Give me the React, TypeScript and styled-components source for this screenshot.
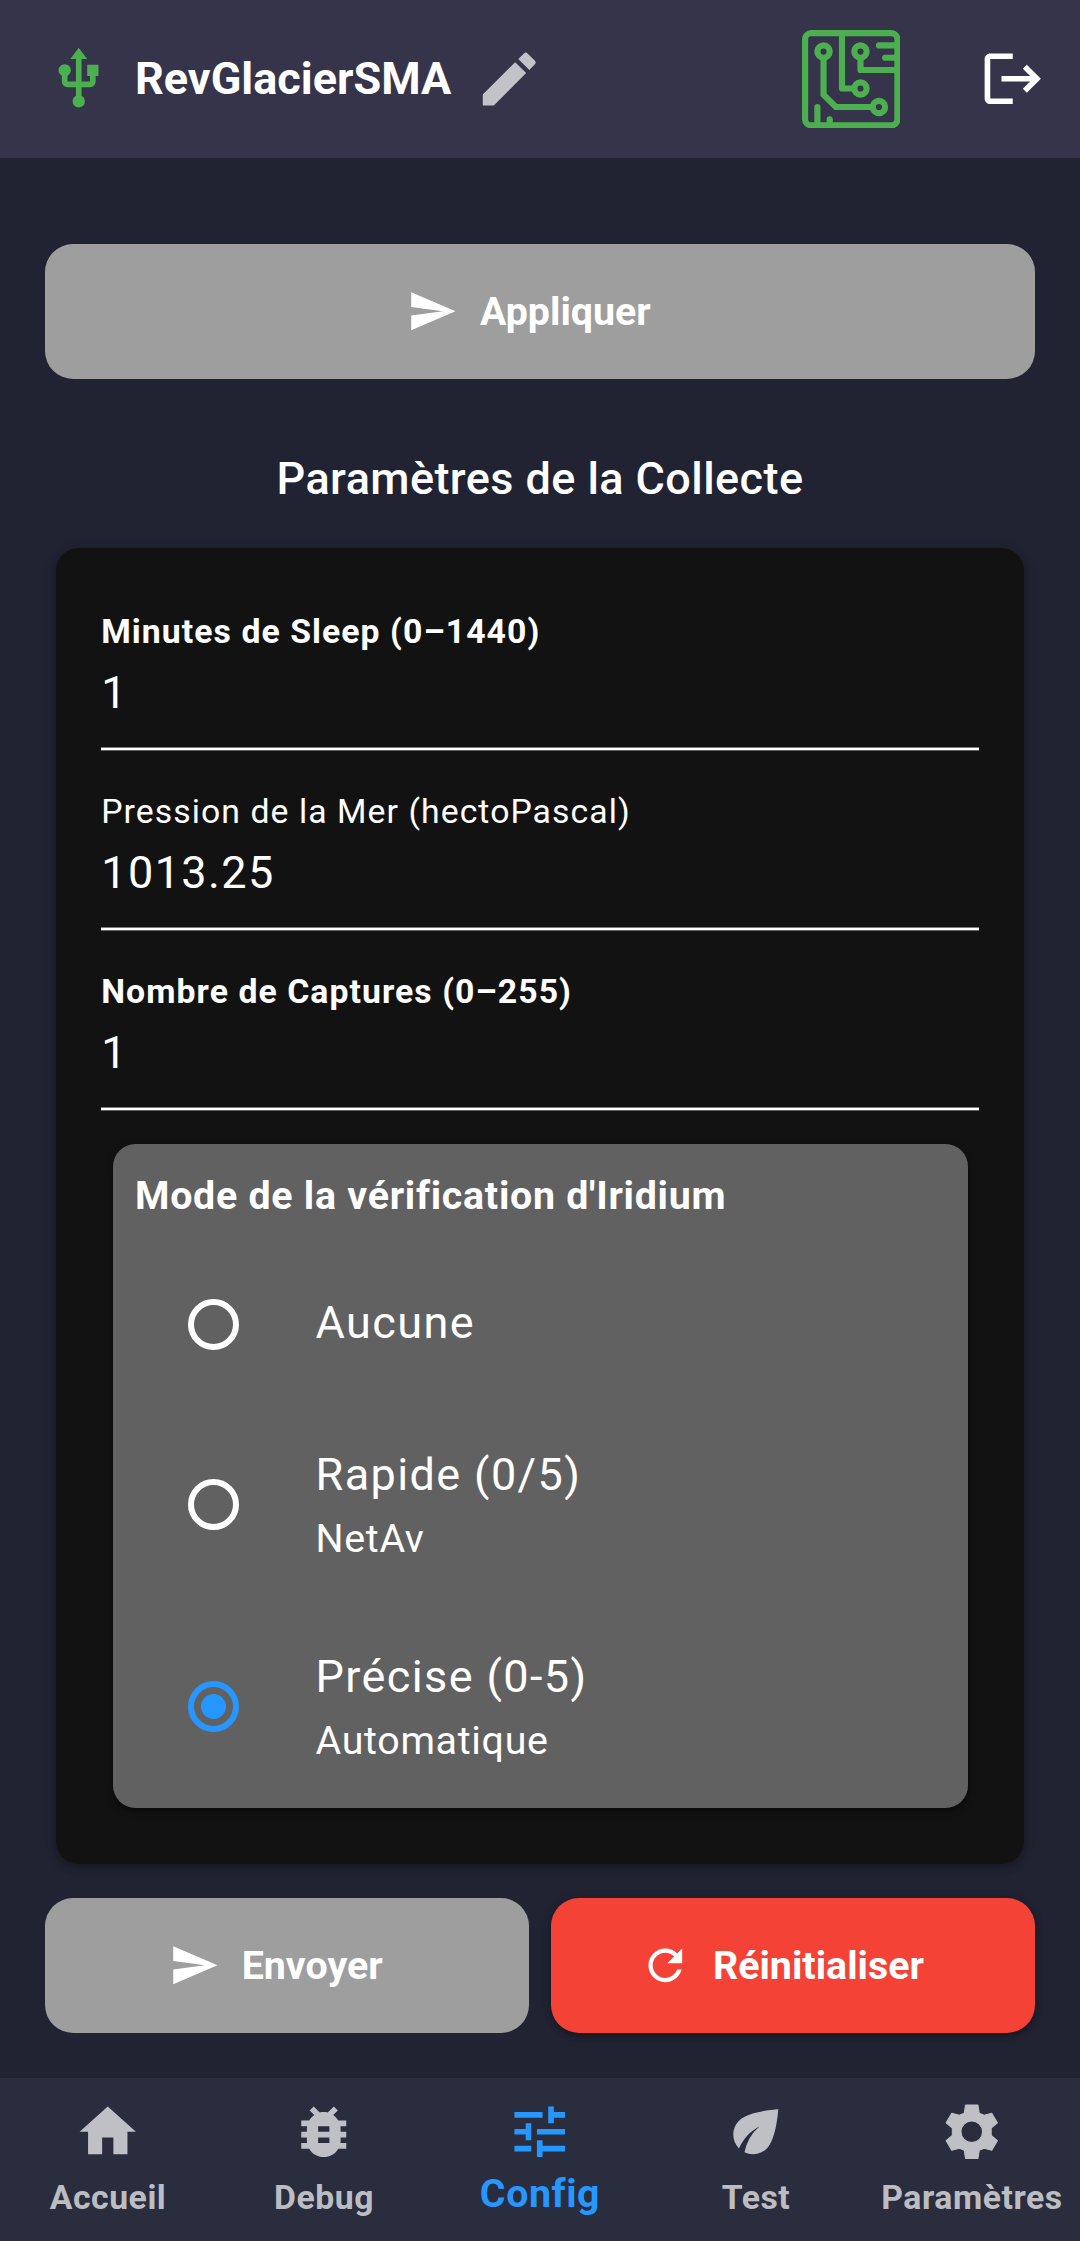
import React, { useState } from 'react';
import styled, { createGlobalStyle, css } from 'styled-components';
import {
  MdBugReport,
  MdEco,
  MdEdit,
  MdHome,
  MdLogout,
  MdRefresh,
  MdSend,
  MdTune,
  MdUsb,
} from 'react-icons/md';

const color = {
  page: '#212332',
  header: '#36344b',
  nav: '#2a2d3e',
  card: '#121212',
  panel: '#616161',
  disabled: '#9e9e9e',
  danger: '#f44336',
  accent: '#2697ff',
  green: '#4caf50',
  muted: 'rgba(255, 255, 255, 0.7)',
};

const GlobalStyle = createGlobalStyle`
  *, *::before, *::after { box-sizing: border-box; }
  body {
    margin: 0;
    background: ${color.page};
    color: #fff;
    font-family: Roboto, sans-serif;
  }
  svg { display: block; flex: none; }
`;

const Screen = styled.div`
  display: flex;
  flex-direction: column;
  width: 1080px;
  height: 2241px;
  overflow: hidden;
`;

const Header = styled.header`
  display: flex;
  align-items: center;
  flex: none;
  height: 157.5px;
  padding: 0 33.75px 0 45px;
  background: ${color.header};
`;

const DeviceName = styled.h1`
  margin: 0 22.5px;
  font-size: 45px;
  line-height: 53px;
  font-weight: 700;
  white-space: nowrap;
`;

const HeaderActions = styled.div`
  display: flex;
  align-items: center;
  gap: 78.5px;
  margin-left: auto;
`;

const Content = styled.main`
  display: flex;
  flex-direction: column;
  flex: 1;
  min-height: 0;
  padding: 86.25px 45px 44px;
`;

const Button = styled.button<{ $tone: 'disabled' | 'danger' }>`
  display: flex;
  align-items: center;
  justify-content: center;
  gap: 22.5px;
  flex: 1 1 0;
  height: 135px;
  padding: 0 22.5px 0 0;
  border: 0;
  border-radius: 28px;
  color: #fff;
  background: ${(p) => color[p.$tone]};
  font: 700 39.375px/46px Roboto, sans-serif;
  ${(p) =>
    p.$tone === 'danger' &&
    css`
      box-shadow: 0 3px 6px rgba(0, 0, 0, 0.3), 0 1px 10px rgba(0, 0, 0, 0.14);
    `}
`;

const ButtonText = styled.span`
  padding-top: 2px;
`;

const ButtonRow = styled.div`
  display: flex;
  flex: none;
  gap: 22.5px;
`;

const SectionTitle = styled.h2`
  margin: 73px 0 42px;
  text-align: center;
  font-size: 45px;
  line-height: 54px;
  font-weight: 500;
  letter-spacing: 0.42px;
`;

const Card = styled.section`
  flex: none;
  height: 1316px;
  margin: 0 11.25px 33.75px;
  padding: 57px 45px 0;
  border-radius: 22.5px;
  background: ${color.card};
  box-shadow: 0 5px 8px rgba(0, 0, 0, 0.2), 0 1px 12px rgba(0, 0, 0, 0.16);
`;

const Field = styled.label`
  display: flex;
  flex-direction: column;
  height: 180px;
`;

const FieldLabel = styled.span<{ $bold: boolean }>`
  font-size: 33.75px;
  line-height: 54px;
  font-weight: ${(p) => (p.$bold ? 700 : 400)};
  letter-spacing: 1.06px;
`;

const FieldInput = styled.input`
  height: 91.25px;
  padding: 0 0 21.25px;
  border: 0;
  border-bottom: 2px solid #fff;
  box-shadow: 0 1px 0 rgba(255, 255, 255, 0.35), inset 0 -1px 0 rgba(255, 255, 255, 0.45);
  outline: 0;
  background: none;
  color: #fff;
  font: 400 45px/54px Roboto, sans-serif;
  letter-spacing: 1.4px;
`;

const Panel = styled.fieldset`
  height: 664px;
  margin: -1px 11.25px 0;
  padding: 22.5px 22.5px 0;
  border: 0;
  border-radius: 22.5px;
  background: ${color.panel};
  box-shadow: 0 3px 6px rgba(0, 0, 0, 0.5);
`;

const PanelTitle = styled.div`
  margin-bottom: 20px;
  font-size: 39.375px;
  line-height: 59px;
  font-weight: 700;
  letter-spacing: 0.72px;
`;

const Option = styled.button<{ $height: number }>`
  display: flex;
  align-items: center;
  width: 100%;
  height: ${(p) => p.$height}px;
  padding: 0 0 0 53px;
  border: 0;
  background: none;
  color: #fff;
  text-align: left;
  font: 400 45px/54px Roboto, sans-serif;
  letter-spacing: 1.4px;
`;

const Radio = styled.span<{ $checked: boolean }>`
  display: grid;
  place-items: center;
  flex: none;
  width: 51px;
  height: 51px;
  margin-right: 76.5px;
  border: 6px solid ${(p) => (p.$checked ? color.accent : '#fff')};
  border-radius: 50%;

  &::after {
    content: '';
    width: 25px;
    height: 25px;
    border-radius: 50%;
    background: ${(p) => (p.$checked ? color.accent : 'transparent')};
  }
`;

const OptionText = styled.span<{ $twoLine: boolean }>`
  display: flex;
  flex-direction: column;
  gap: 11px;
  padding: ${(p) => (p.$twoLine ? '4px 0 0' : '0 0 3px')};
`;

const OptionHint = styled.span`
  font-size: 39.375px;
  line-height: 52px;
  letter-spacing: 0.7px;
`;

const Nav = styled.nav`
  display: grid;
  grid-template-columns: repeat(5, 1fr);
  flex: none;
  height: 163px;
  background: ${color.nav};
`;

const NavItem = styled.button<{ $active: boolean }>`
  display: flex;
  flex-direction: column;
  align-items: center;
  padding: 19.5px 0 0;
  border: 0;
  background: none;
  color: ${(p) => (p.$active ? color.accent : color.muted)};
  font-family: Roboto, sans-serif;
  font-size: ${(p) => (p.$active ? 39.375 : 33.75)}px;
  line-height: ${(p) => (p.$active ? 57 : 65)}px;
  font-weight: 700;
  letter-spacing: 0.55px;
  white-space: nowrap;
`;

const ICON = 67.5;

function CircuitLogo() {
  return (
    <svg width="98.5" height="98.5" viewBox="0 0 16 16" fill="none" stroke={color.green} strokeWidth="1">
      <rect x="0.5" y="0.5" width="15" height="15" rx="1" />
      <circle cx="3.5" cy="3.5" r="1" />
      <circle cx="9.5" cy="3.5" r="1" />
      <circle cx="9.5" cy="9.5" r="1" />
      <circle cx="12.5" cy="12.5" r="1" />
      <g strokeLinejoin="round">
        <path strokeLinejoin="miter" d="M3.5 4.6V10.5L5.5 12.5H11.4" />
        <path d="M6.5 0.5V9.5H8.4" />
        <path d="M9.5 4.6V6.5H15.5" />
      </g>
      <path strokeLinecap="round" d="M15.4 2.5H12.5M15.4 4.5H13.5M2.5 15.4V12.5M4.5 15.4V14.5" />
    </svg>
  );
}

function GearIcon({ size }: { size: number }) {
  return (
    <svg width={size} height={size} viewBox="-12 -12 24 24" fill="#bfc0c5" stroke="#bfc0c5" strokeWidth="0.4" strokeLinejoin="round">
      <path
        fillRule="evenodd"
        d="M-2.2-9.5H2.2L2.65-6.6L4.4-5.85L7.1-6.55L9.1-3.15L6.9-1.3V1.3L9.1 3.15L7.1 6.55L4.4 5.85L2.65 6.6L2.2 9.5H-2.2L-2.65 6.6L-4.4 5.85L-7.1 6.55L-9.1 3.15L-6.9 1.3V-1.3L-9.1-3.15L-7.1-6.55L-4.4-5.85L-2.65-6.6ZM0-3.85A3.85 3.85 0 1 0 0 3.85A3.85 3.85 0 1 0 0-3.85Z"
      />
    </svg>
  );
}

const fields = [
  { label: 'Minutes de Sleep (0–1440)', value: '1', bold: true },
  { label: 'Pression de la Mer (hectoPascal)', value: '1013.25', bold: false },
  { label: 'Nombre de Captures (0–255)', value: '1', bold: true },
];

const options = [
  { title: 'Aucune', height: 157.5 },
  { title: 'Rapide (0/5)', hint: 'NetAv', height: 202.5 },
  { title: 'Précise (0-5)', hint: 'Automatique', height: 202.5 },
];

const tabs = [
  { label: 'Accueil', Icon: MdHome },
  { label: 'Debug', Icon: MdBugReport },
  { label: 'Config', Icon: MdTune },
  { label: 'Test', Icon: MdEco },
  { label: 'Paramètres', Icon: GearIcon },
];

export default function App() {
  const [mode, setMode] = useState(2);
  const [tab, setTab] = useState(2);

  return (
    <Screen>
      <GlobalStyle />
      <Header>
        <MdUsb size={ICON} color={color.green} />
        <DeviceName>RevGlacierSMA</DeviceName>
        <MdEdit size={70.3} color={color.muted} />
        <HeaderActions>
          <CircuitLogo />
          <MdLogout size={ICON} />
        </HeaderActions>
      </Header>

      <Content>
        <ButtonRow>
          <Button $tone="disabled">
            <MdSend size={50.6} />
            <ButtonText>Appliquer</ButtonText>
          </Button>
        </ButtonRow>

        <SectionTitle>Paramètres de la Collecte</SectionTitle>

        <Card>
          {fields.map((f) => (
            <Field key={f.label}>
              <FieldLabel $bold={f.bold}>{f.label}</FieldLabel>
              <FieldInput defaultValue={f.value} />
            </Field>
          ))}
          <Panel>
            <PanelTitle>Mode de la vérification d'Iridium</PanelTitle>
            {options.map((o, i) => (
              <Option key={o.title} $height={o.height} onClick={() => setMode(i)}>
                <Radio $checked={mode === i} />
                <OptionText $twoLine={Boolean(o.hint)}>
                  <span>{o.title}</span>
                  {o.hint && <OptionHint>{o.hint}</OptionHint>}
                </OptionText>
              </Option>
            ))}
          </Panel>
        </Card>

        <ButtonRow>
          <Button $tone="disabled">
            <MdSend size={50.6} />
            <ButtonText>Envoyer</ButtonText>
          </Button>
          <Button $tone="danger">
            <MdRefresh size={50.6} />
            <ButtonText>Réinitialiser</ButtonText>
          </Button>
        </ButtonRow>
      </Content>

      <Nav>
        {tabs.map(({ label, Icon }, i) => (
          <NavItem key={label} $active={tab === i} onClick={() => setTab(i)}>
            <Icon size={ICON} />
            {label}
          </NavItem>
        ))}
      </Nav>
    </Screen>
  );
}
